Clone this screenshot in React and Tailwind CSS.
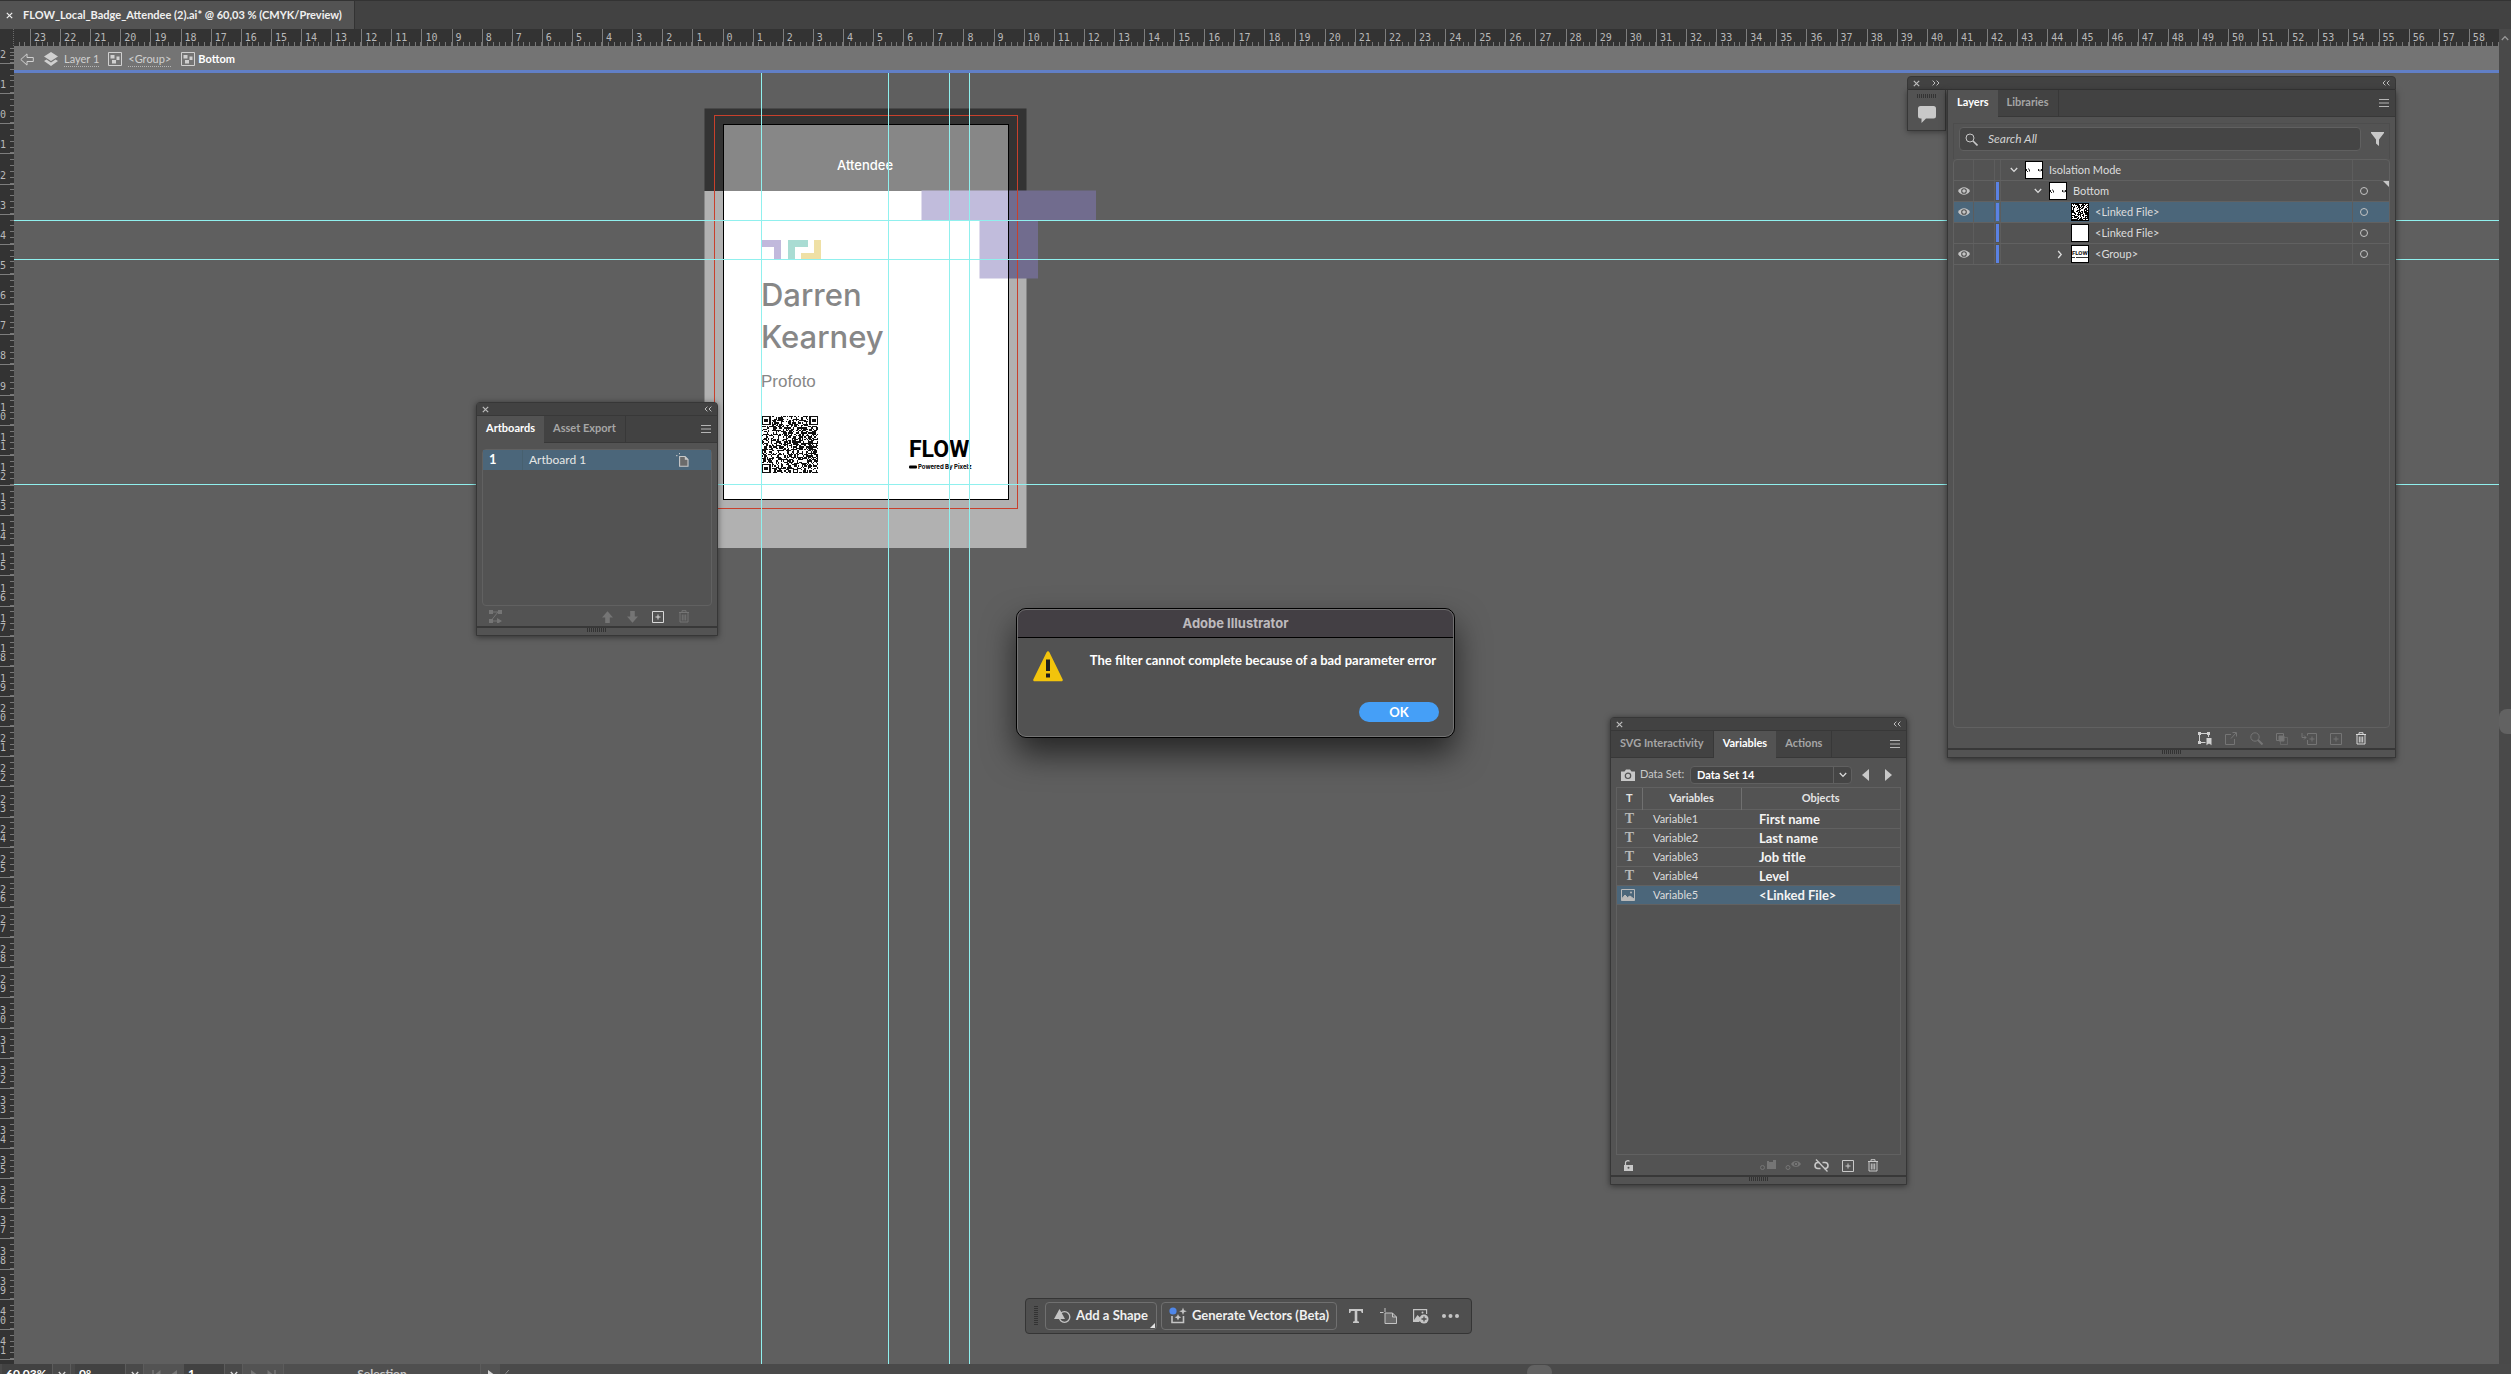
import { useState } from "react";

const H_LABELS = [];
for (let n = 23; n >= 0; n--) H_LABELS.push(n);
for (let n = 1; n <= 58; n++) H_LABELS.push(n);

const V_LABELS = [1];
for (let n = 0; n <= 41; n++) V_LABELS.push(n);

const VARIABLES = [
  { name: "Variable1", object: "First name", kind: "text" },
  { name: "Variable2", object: "Last name", kind: "text" },
  { name: "Variable3", object: "Job title", kind: "text" },
  { name: "Variable4", object: "Level", kind: "text" },
  { name: "Variable5", object: "<Linked File>", kind: "image" },
];

const LAYERS = [
  { name: "Isolation Mode", thumb: "page", arrow: "down", pad: "pl-1", root: true },
  { name: "Bottom", thumb: "page", arrow: "down", pad: "pl-7", visible: true, corner: true },
  { name: "<Linked File>", thumb: "qr", pad: "pl-[50px]", visible: true, selected: true },
  { name: "<Linked File>", thumb: "blank", pad: "pl-[50px]" },
  { name: "<Group>", thumb: "flow", arrow: "right", pad: "pl-[50px]", visible: true },
];

/* ---------- icons ---------- */

function Svg({ w = 14, h = 14, children, className = "" }) {
  return (
    <svg
      width={w}
      height={h}
      viewBox={`0 0 ${w} ${h}`}
      fill="none"
      stroke="currentColor"
      className={`shrink-0 ${className}`}
      aria-hidden="true"
    >
      {children}
    </svg>
  );
}

const CloseIcon = () => (
  <Svg w={7} h={7}>
    <path d="M.8.8l5.4 5.4M6.2.8L.8 6.2" strokeWidth="1.2" />
  </Svg>
);

const CollapseIcon = ({ flip }) => (
  <Svg w={8} h={6} className={flip ? "rotate-180" : ""}>
    <path d="M3.4.6L1 3l2.4 2.4M7.4.6L5 3l2.4 2.4" />
  </Svg>
);

const MenuIcon = () => (
  <Svg w={10} h={8}>
    <path d="M0 .5h10M0 4h10M0 7.5h10" />
  </Svg>
);

const ChevronDown = () => (
  <Svg w={8} h={6}>
    <path d="M.8 1L4 4.4 7.2 1" strokeWidth="1.3" />
  </Svg>
);

const ChevronRight = () => (
  <Svg w={6} h={9}>
    <path d="M1.2 1l3 3.5-3 3.5" strokeWidth="1.3" />
  </Svg>
);

const PlusBox = () => (
  <Svg w={12} h={12}>
    <path d="M.5.5h11v11H.5zM6 3.5v5M3.5 6h5" />
  </Svg>
);

const TrashIcon = () => (
  <Svg w={12} h={13}>
    <path d="M1 2.5h10M4 2V.7h4V2M2 3v9h8V3M4.3 4.5v6M6 4.5v6M7.7 4.5v6" />
  </Svg>
);

const EyeIcon = () => (
  <Svg w={12} h={8}>
    <path d="M0 4C1.6 1.4 3.6.2 6 .2S10.4 1.4 12 4c-1.6 2.6-3.600 3.800-6 3.800S1.600 6.600 0 4z" fill="currentColor" stroke="none" />
    <circle cx="6" cy="4" r="2.3" stroke="#505050" strokeWidth="1.1" />
  </Svg>
);

const GroupIcon = () => (
  <Svg w={14} h={14}>
    <path d="M.5.5h13v13H.5z" />
    <path d="M2.5 3h4v3.500h-4zM8.500 4.500h3V8h-3zM4 8h4v3.500H4z" fill="currentColor" stroke="none" />
  </Svg>
);

const ArrowUp = ({ flip }) => (
  <Svg w={11} h={12} className={flip ? "rotate-180" : ""}>
    <path d="M5.5.3L11 6.500H7.800V12H3.200V6.500H0z" fill="currentColor" stroke="none" />
  </Svg>
);

const PageIcon = ({ className }) => (
  <Svg w={13} h={14} className={className}>
    <path d="M3.600 3.500h5.400l3 3v6.800H3.600z" fill="#6b6b6b" strokeWidth="1.100" />
    <path d="M8.800 3.300v3.500h3.500z" fill="currentColor" stroke="none" />
    <path d="M3.500 0v1.200M0 2.700h1.500" />
  </Svg>
);

/* ---------- QR code ---------- */

const QR_SIZE = 45;
const QR_PATH = (() => {
  let seed = 90210;
  let d = "";
  const finder = (x, y) => {
    if (x > 7 || y > 7) return null;
    if (x === 7 || y === 7) return false;
    const ring = Math.max(Math.abs(x - 3), Math.abs(y - 3));
    return ring === 3 || ring <= 1;
  };
  for (let y = 0; y < QR_SIZE; y++) {
    for (let x = 0; x < QR_SIZE; x++) {
      seed = (seed * 1103515245 + 12345) % 2147483648;
      const f =
        finder(x, y) ?? finder(QR_SIZE - 1 - x, y) ?? finder(x, QR_SIZE - 1 - y);
      if (f ?? seed / 2147483648 > 0.48) d += `M${x} ${y}h1v1h-1z`;
    }
  }
  return d;
})();

/* ---------- rulers ---------- */

function TopRuler() {
  return (
    <div className="flex h-[17px] bg-[#333333] font-['DejaVu_Sans_Mono',monospace] text-[10px] leading-4 text-[#b9b9b9]">
      <div className="w-[14px] shrink-0 border-r border-dotted border-[#6a6a6a]" />
      <div className="flex w-4 shrink-0 items-end justify-evenly">
        <i className="h-1 w-px bg-[#777]" />
        <i className="h-1 w-px bg-[#777]" />
      </div>
      {H_LABELS.map((n, i) => (
        <div key={i} className="relative flex min-w-0 flex-1 items-end border-l border-[#7d7d7d]">
          {[1, 2, 3, 4, 5].map((t) => (
            <i key={t} className="h-1 flex-1 border-r border-[#777] last:border-r-0" />
          ))}
          <span className="absolute left-[3px] top-px">{n}</span>
        </div>
      ))}
    </div>
  );
}

function VCell({ label, className = "" }) {
  return (
    <div className={`relative flex flex-col items-end border-b border-[#7d7d7d] ${className}`}>
      {[1, 2, 3, 4, 5].map((t) => (
        <i key={t} className="w-1 flex-1 border-b border-[#777] last:border-b-0" />
      ))}
      <span className="absolute bottom-1 left-0 w-[6px] break-all leading-[9px]">{label}</span>
    </div>
  );
}

function LeftRuler() {
  return (
    <div className="flex w-[14px] shrink-0 flex-col bg-[#333333] font-['DejaVu_Sans_Mono',monospace] text-[10px] text-[#b9b9b9]">
      <VCell label="2" className="h-[18px]" />
      {V_LABELS.map((n, i) => (
        <VCell key={i} label={n} className="min-h-0 flex-1" />
      ))}
      <div className="h-1" />
    </div>
  );
}

/* ---------- badge artwork ---------- */

function Artwork() {
  return (
    <svg
      className="absolute left-[690px] top-[17px]"
      width="440"
      height="480"
      viewBox="690 90 440 480"
      aria-label="Attendee badge"
    >
      <rect x="704.5" y="191" width="322" height="357" fill="#b1b1b1" />
      <rect x="704.5" y="108.5" width="322" height="82.5" fill="#333333" />
      <rect x="723.5" y="124.5" width="285" height="375" fill="#fff" />
      <rect x="723.5" y="124.5" width="285" height="66.5" fill="#878787" />

      <path d="M1008.5 190.5H1096V220h-58v58.5h-29.5z" fill="#716c8e" />
      <path d="M921.5 190.5h87v88h-29V220h-58z" fill="#c1bcdc" />

      <rect x="723.5" y="124.5" width="285" height="375" fill="none" stroke="#000" />
      <rect x="714.5" y="115.5" width="303" height="393" fill="none" stroke="#c8402c" />

      <path d="M762 240h19v19h-7v-12h-12z" fill="#c1b9dc" />
      <path d="M788 240h20v7h-13v12h-7z" fill="#a9dcd3" />
      <path d="M814 240h7v19h-20v-6h13z" fill="#efe0a5" />

      <g fontFamily="Inter, sans-serif" fontWeight="500">
        <text x="837" y="170" fontSize="13" fill="#fff">Attendee</text>
        <text x="761" y="306" fontSize="31" fill="#878787">Darren</text>
        <text x="761" y="348" fontSize="31" fill="#878787">Kearney</text>
      </g>
      <text x="761" y="387" fontSize="17" fill="#878787" fontFamily="'Liberation Sans', sans-serif">
        Profoto
      </text>

      <svg x="762" y="416" width="56" height="57" viewBox="0 0 45 45" preserveAspectRatio="none">
        <path d={QR_PATH} fill="#111" shapeRendering="crispEdges" />
      </svg>

      <text x="909" y="457" fontSize="23" fontWeight="700" fill="#000" fontFamily="'Liberation Sans Narrow', Roboto, sans-serif">
        FLOW
      </text>
      <rect x="909" y="465.5" width="8" height="3" rx="1" fill="#000" />
      <text x="918" y="469" fontSize="6" fontWeight="700" fill="#000" fontFamily="Inter, sans-serif">
        Powered By Pixelz
      </text>
    </svg>
  );
}

function Guides() {
  return (
    <>
      <i className="absolute inset-y-0 left-[747px] w-px bg-[#90f0ee]" />
      <i className="absolute inset-y-0 left-[874px] w-px bg-[#90f0ee]" />
      <i className="absolute inset-y-0 left-[935px] w-px bg-[#90f0ee]" />
      <i className="absolute inset-y-0 left-[955px] w-px bg-[#90f0ee]" />
      <i className="absolute inset-x-0 top-[147px] h-px bg-[#90f0ee]" />
      <i className="absolute inset-x-0 top-[186px] h-px bg-[#90f0ee]" />
      <i className="absolute inset-x-0 top-[411px] h-px bg-[#90f0ee]" />
    </>
  );
}

/* ---------- floating panels ---------- */

function Grip({ className = "" }) {
  return (
    <div
      className={`h-1 w-5 bg-[repeating-linear-gradient(90deg,#333_0_1px,transparent_1px_2px)] ${className}`}
    />
  );
}

function TabStrip({ tabs, active, onChange }) {
  return (
    <div className="flex h-[27px] bg-[#424242]" role="tablist">
      {tabs.map((tab) => (
        <button
          key={tab}
          role="tab"
          aria-selected={tab === active}
          onClick={() => onChange(tab)}
          className={
            tab === active
              ? "bg-[#535353] px-[9px] pb-[2px] text-[11px] font-bold text-white"
              : "border-r border-b border-[#383838] px-[9px] pb-px text-[11px] font-bold text-[#a6a6a6]"
          }
        >
          {tab}
        </button>
      ))}
      <div className="flex flex-1 items-center justify-end border-b border-[#383838] pr-[6px]">
        <button aria-label="Panel menu" className="text-[#b5b5b5]">
          <MenuIcon />
        </button>
      </div>
    </div>
  );
}

function PanelFoot() {
  return (
    <div className="flex h-[9px] justify-center border-t-2 border-[#383838]">
      <Grip />
    </div>
  );
}

function TitleBar() {
  return (
    <div className="flex h-[13px] items-center justify-between border-b border-[#383838] bg-[#424242] px-[5px] text-[#bdbdbd]">
      <button aria-label="Close panel"><CloseIcon /></button>
      <button aria-label="Collapse panel"><CollapseIcon /></button>
    </div>
  );
}

function ArtboardsPanel() {
  const [tab, setTab] = useState("Artboards");
  return (
    <section className="absolute left-[476px] top-[402px] flex h-[234px] w-[242px] flex-col rounded-t border border-[#373737] bg-[#535353] shadow-[0_1px_6px_rgba(0,0,0,0.5)]">
      <TitleBar />
      <TabStrip tabs={["Artboards", "Asset Export"]} active={tab} onChange={setTab} />
      <div className="mx-[5px] mt-[6px] flex-1 rounded-sm border border-[#616161]">
        <div className="flex h-5 items-center bg-[#4b667a] text-[12px] text-[#e6e6e6]">
          <span className="w-10 border-r border-[#47606f] pl-[6px] text-[13px] font-bold text-white">1</span>
          <span className="flex-1 pl-[6px]">Artboard 1</span>
          <PageIcon className="mr-[22px] text-[#c8c8c8]" />
        </div>
      </div>
      <div className="flex h-5 items-center pl-3 pr-[27px] pt-px text-[#757575]">
        <button aria-label="Rearrange all artboards" className="mr-auto">
          <Svg w={13} h={13}>
            <path d="M0 0h4v4H0zM9 0h4v4H9zM0 9h4v4H0zM8 8l5 3-5 3z" fill="currentColor" stroke="none" />
            <path d="M4 2h5L3 9.500M4 11h5" />
          </Svg>
        </button>
        <div className="flex items-center gap-[14px]">
          <button aria-label="Move up"><ArrowUp /></button>
          <button aria-label="Move down"><ArrowUp flip /></button>
          <button aria-label="New artboard" className="text-[#d8d8d8]"><PlusBox /></button>
          <button aria-label="Delete artboard"><TrashIcon /></button>
        </div>
      </div>
      <PanelFoot />
    </section>
  );
}

function Thumb({ kind }) {
  return (
    <svg width="18" height="18" viewBox="0 0 18 18" className="shrink-0" aria-hidden="true">
      <rect x=".5" y=".5" width="17" height="17" fill="#fff" stroke="#000" />
      {kind === "page" && (
        <path d="M1 8h1v2H1zM3 7.500h1v1H3zM4 8.500h1v2H4zM2 10h1v1H2zM13 8h1v2h-1zM14.500 8.500h1v2h-1zM16 8h1v2h-1z" fill="#222" />
      )}
      {kind === "qr" && (
        <svg x="1" y="1" width="16" height="16" viewBox="12 12 16 16">
          <path d={QR_PATH} fill="#000" />
        </svg>
      )}
      {kind === "flow" && (
        <>
          <text x="1" y="10" fontSize="6" fontWeight="700" fontFamily="Roboto, sans-serif" fill="#111">FLOW</text>
          <path d="M1 12.500h3M5 12.500h12" stroke="#333" />
        </>
      )}
    </svg>
  );
}

function LayerRow({ layer }) {
  return (
    <li
      className={`relative flex h-[21px] border-b border-[#616161] text-[11px] text-[#dcdcdc] ${
        layer.selected ? "bg-[#4b667a]" : ""
      }`}
    >
      <button
        aria-label="Toggle visibility"
        className="flex w-5 items-center justify-center border-r border-[#5d5d5d] text-[#c4c4c4]"
      >
        {layer.visible && <EyeIcon />}
      </button>
      <button aria-label="Toggle lock" className="w-[21px] border-r border-[#5d5d5d]" />
      <span className="flex w-[6px] justify-center border-r border-[#5d5d5d] py-px">
        {!layer.root && <i className="w-[3px] bg-[#5b82e3]" />}
      </span>
      <div className={`flex flex-1 items-center border-r border-[#5d5d5d] ${layer.pad}`}>
        <span className="flex w-[17px] shrink-0 items-center justify-center text-[#dcdcdc]">
          {layer.arrow === "down" && <ChevronDown />}
          {layer.arrow === "right" && <ChevronRight />}
        </span>
        <span className="ml-[3px] flex items-center gap-[6px]">
          <Thumb kind={layer.thumb} />
          {layer.name}
        </span>
      </div>
      <span className="flex w-9 items-center pl-[7px]">
        {!layer.root && <i className="size-[8px] rounded-full border border-[#c4c4c4]" />}
      </span>
      {layer.corner && (
        <Svg w={6} h={6} className="absolute right-0 top-0">
          <path d="M0 0h6v6z" fill="#c8c8c8" stroke="none" />
        </Svg>
      )}
    </li>
  );
}

function LayersPanel() {
  const [tab, setTab] = useState("Layers");
  return (
    <section className="absolute right-[115px] top-[76px] w-[489px]">
      <div className="flex h-[14px] items-center rounded-t border border-[#373737] bg-[#424242] px-[5px] text-[#bdbdbd]">
        <button aria-label="Close panel"><CloseIcon /></button>
        <button aria-label="Expand comments" className="ml-3"><CollapseIcon flip /></button>
        <button aria-label="Collapse panel" className="ml-auto"><CollapseIcon /></button>
      </div>
      <div className="flex items-start">
        <div className="mr-px flex h-[41px] w-[39px] flex-col items-center border border-t-0 border-[#373737] bg-[#535353] pt-1 text-[#c8c8c8] shadow-[0_1px_6px_rgba(0,0,0,0.4)]">
          <Grip />
          <button aria-label="Comments" className="mt-2">
            <Svg w={18} h={17}>
              <path d="M2.500 0h13A2.500 2.500 0 0118 2.500V10a2.500 2.500 0 01-2.500 2.500H8L3.500 17v-4.500h-1A2.500 2.500 0 010 10V2.500A2.500 2.500 0 012.500 0z" fill="currentColor" stroke="none" />
            </Svg>
          </button>
        </div>
        <div className="flex h-[668px] flex-1 flex-col border border-t-0 border-[#373737] bg-[#535353] shadow-[0_2px_6px_rgba(0,0,0,0.5)]">
          <TabStrip tabs={["Layers", "Libraries"]} active={tab} onChange={setTab} />
          <div className="mx-[5px] mt-[6px] flex h-9 items-center border border-b-0 border-[#4d4d4d] px-[5px] pb-[5px]">
            <label className="flex h-6 flex-1 items-center rounded-sm border border-[#606060] bg-[#454545] pl-[5px] text-[#c8c8c8]">
              <Svg w={13} h={13}>
                <circle cx="5" cy="5" r="4" />
                <path d="M8 8l4.500 4.500" strokeWidth="1.600" />
              </Svg>
              <input
                type="text"
                aria-label="Search layers"
                placeholder="Search All"
                className="ml-[10px] w-full bg-transparent text-[12px] italic outline-none placeholder:text-[#d2d2d2]"
              />
            </label>
            <button aria-label="Filter" className="ml-[10px] text-[#c8c8c8]">
              <Svg w={13} h={14}>
                <path d="M0 0h13v1L8 7.500V14l-3-2.500v-4L0 1z" fill="currentColor" stroke="none" />
              </Svg>
            </button>
          </div>
          <ul className="mx-[5px] flex-1 rounded-sm border border-[#616161]">
            {LAYERS.map((l, i) => (
              <LayerRow key={i} layer={l} />
            ))}
          </ul>
          <div className="flex h-5 items-center justify-end gap-[13px] pr-7 pt-px text-[#757575]">
            <button aria-label="Collect for export" className="text-[#d0d0d0]">
              <Svg w={14} h={14}>
                <path d="M1.500 1.500h9v9h-9z" />
                <path d="M0 0h3v3H0zM9 0h3v3H9zM0 9h3v3H0z" fill="currentColor" stroke="none" />
                <path d="M8 5.500h6V14l-3-2-3 2z" fill="currentColor" stroke="#535353" />
              </Svg>
            </button>
            <button aria-label="Export">
              <Svg w={12} h={13}>
                <path d="M6 2.500H.5v10h9V7M6 6.500L11 1M7.500.5h4v4" />
              </Svg>
            </button>
            <button aria-label="Locate object">
              <Svg w={13} h={13}>
                <circle cx="5" cy="5" r="4.200" />
                <path d="M8 8l4.500 4.500" strokeWidth="2" />
              </Svg>
            </button>
            <button aria-label="Clipping mask">
              <Svg w={12} h={12}>
                <path d="M.5.5h7v7h-7z" />
                <path d="M4.500 4.500h7v7h-7z" opacity=".6" />
                <path d="M3 3h5v5H3z" fill="currentColor" />
              </Svg>
            </button>
            <button aria-label="New sublayer">
              <Svg w={16} h={12}>
                <path d="M1 0v4.500h4M3 2.500l2 2-2 2M6.500 2.500v-2h9v11h-9V7M11 3.500v5M8.500 6h5" />
              </Svg>
            </button>
            <button aria-label="New layer"><PlusBox /></button>
            <button aria-label="Delete layer" className="text-[#d8d8d8]"><TrashIcon /></button>
          </div>
          <PanelFoot />
        </div>
      </div>
    </section>
  );
}

function VariablesPanel() {
  const [tab, setTab] = useState("Variables");
  const [selected, setSelected] = useState("Variable5");
  return (
    <section className="absolute left-[1610px] top-[717px] flex h-[468px] w-[297px] flex-col rounded-t border border-[#373737] bg-[#535353] shadow-[0_1px_6px_rgba(0,0,0,0.5)]">
      <TitleBar />
      <TabStrip tabs={["SVG Interactivity", "Variables", "Actions"]} active={tab} onChange={setTab} />
      <div className="flex h-[29px] items-center pl-[10px] pr-[14px] pt-1 text-[#c8c8c8]">
        <button aria-label="Capture data set">
          <Svg w={14} h={12}>
            <path d="M0 2.500h3.500L5 .5h4l1.500 2H14V12H0z" fill="currentColor" stroke="none" />
            <circle cx="7" cy="6.800" r="2.700" stroke="#535353" strokeWidth="1.200" />
          </Svg>
        </button>
        <label htmlFor="dataset" className="ml-[5px] text-[11px]">Data Set:</label>
        <div className="relative ml-auto flex">
          <select
            id="dataset"
            className="h-[18px] w-[162px] appearance-none rounded-sm border border-[#606060] bg-[#454545] pl-[6px] text-[11px] font-bold text-white"
          >
            <option>Data Set 14</option>
          </select>
          <span className="pointer-events-none absolute inset-y-px right-px flex w-[18px] items-center justify-center border-l border-[#606060] text-[#dcdcdc]">
            <ChevronDown />
          </span>
        </div>
        <button aria-label="Previous data set" className="ml-[10px]">
          <Svg w={7} h={12}><path d="M7 0v12L0 6z" fill="currentColor" stroke="none" /></Svg>
        </button>
        <button aria-label="Next data set" className="ml-4">
          <Svg w={7} h={12}><path d="M0 0v12l7-6z" fill="currentColor" stroke="none" /></Svg>
        </button>
      </div>
      <div className="mx-[5px] flex-1 border border-[#616161]">
        <table className="w-full table-fixed border-collapse text-left">
          <thead>
            <tr className="h-[21px] border-b border-[#616161] text-center text-[11px] text-[#e4e4e4]">
              <th className="w-[25px] border-r border-[#707070] font-bold">T</th>
              <th className="w-[99px] border-r border-[#707070] font-bold">Variables</th>
              <th className="font-bold">Objects</th>
            </tr>
          </thead>
          <tbody>
            {VARIABLES.map((v) => (
              <tr
                key={v.name}
                onClick={() => setSelected(v.name)}
                className={`h-[19px] border-b border-[#616161] ${selected === v.name ? "bg-[#4b667a]" : ""}`}
              >
                <td className="text-center font-['Liberation_Serif',serif] text-[14px] leading-[18px] font-bold text-[#b9b9b9]">
                  {v.kind === "text" ? (
                    "T"
                  ) : (
                    <Svg w={14} h={12} className="ml-1">
                      <path d="M.5.5h13v11H.5z" />
                      <path d="M1 9.500L4 6l2.500 2.500L9 7l4 3v1.500H1z" fill="currentColor" />
                      <circle cx="10" cy="3.500" r="1" fill="currentColor" stroke="none" />
                    </Svg>
                  )}
                </td>
                <td className="pl-[11px] text-[11px] leading-[18px] text-[#dcdcdc]">{v.name}</td>
                <td className="pl-[18px] text-[13px] leading-[18px] font-bold text-[#f4f4f4]">{v.object}</td>
              </tr>
            ))}
          </tbody>
        </table>
      </div>
      <div className="flex h-5 items-center justify-end gap-[13px] pl-[13px] pr-[27px] pt-px text-[#c8c8c8]">
        <button aria-label="Unlock" className="mr-auto">
          <Svg w={9} h={11}>
            <path d="M0 5h9v6H0z" fill="currentColor" stroke="none" />
            <path d="M1.500 5V2.500C1.500.7 4.500.2 5.500 1.300" strokeWidth="1.200" />
            <circle cx="4.500" cy="7.800" r="1" fill="#535353" stroke="none" />
          </Svg>
        </button>
        <button aria-label="Make text dynamic" className="text-[#757575]">
          <Svg w={17} h={11}>
            <circle cx="3.500" cy="7.500" r="2" />
            <path d="M8 1h2v1h4V0h3v9H8z" fill="currentColor" stroke="none" />
          </Svg>
        </button>
        <button aria-label="Make visibility dynamic" className="-ml-1 text-[#757575]">
          <Svg w={16} h={11}>
            <circle cx="3" cy="7.500" r="2" />
            <path d="M6 4c2.500-4 7.500-4 10 0-2.500 4-7.500 4-10 0z" fill="currentColor" stroke="none" />
            <circle cx="11" cy="4" r="1.800" stroke="#535353" />
          </Svg>
        </button>
        <button aria-label="Unbind variable">
          <Svg w={15} h={13}>
            <path d="M5.500 3.500H4a3 3 0 000 6h2.500M8.500 3.500H11a3 3 0 010 6h-.5" strokeWidth="1.600" />
            <path d="M2 .5l11.500 12" strokeWidth="1.300" />
          </Svg>
        </button>
        <button aria-label="New variable"><PlusBox /></button>
        <button aria-label="Delete variable"><TrashIcon /></button>
      </div>
      <PanelFoot />
    </section>
  );
}

function ErrorDialog() {
  return (
    <div
      role="alertdialog"
      aria-labelledby="dlg-title"
      className="absolute left-[1016px] top-[608px] w-[439px] overflow-hidden rounded-[10px] border border-black bg-[#525252] shadow-[0_16px_32px_rgba(0,0,0,0.6)]"
    >
      <div className="absolute inset-0 rounded-[9px] border border-[#7d7d7d]/80" />
      <h2
        id="dlg-title"
        className="border-b border-black bg-[#433f44] text-center font-[Inter,sans-serif] text-[13px] leading-7 font-bold text-[#bdbabd]"
      >
        Adobe Illustrator
      </h2>
      <div className="relative flex items-start justify-between pl-4 pr-[18px] pt-[13px]">
        <svg width="30" height="31" viewBox="0 0 30 31" aria-hidden="true">
          <path d="M13.600 1.200a1.600 1.600 0 012.800 0l13.200 27c.5 1-.1 2-1.200 2H1.600c-1.100 0-1.700-1-1.200-2z" fill="#f2c40c" />
          <path d="M13 8.500h4V20h-4zM13 22.500h4v4h-4z" fill="#1e1e1e" />
        </svg>
        <p className="text-[13px] leading-[18px] font-bold text-white">
          The filter cannot complete because of a bad parameter error
        </p>
      </div>
      <div className="relative flex justify-end px-[15px] pb-[15px] pt-5">
        <button className="h-5 w-20 rounded-full bg-[#459ff7] text-[13px] leading-5 font-bold text-white">OK</button>
      </div>
    </div>
  );
}

function TaskBar() {
  return (
    <div className="absolute left-[1025px] top-[1298px] flex h-9 items-center rounded border border-[#353535] bg-[#4f4f4f] pl-2 pr-3 text-[13px] font-bold text-[#f0f0f0]">
      <div className="h-5 w-1 bg-[repeating-linear-gradient(180deg,#333_0_1px,transparent_1px_2px)]" />
      <button className="relative ml-[7px] flex h-7 w-28 items-center justify-center gap-[5px] rounded-sm border border-[#707070]">
        <Svg w={17} h={14} className="text-[#c4c4c4]">
          <circle cx="10.500" cy="8" r="5.300" strokeWidth="1.300" />
          <path d="M5.500 0L11 10H0z" fill="currentColor" stroke="none" />
        </Svg>
        Add a Shape
        <Svg w={5} h={5} className="absolute bottom-px right-px">
          <path d="M5 0v5H0z" fill="#e4e4e4" stroke="none" />
        </Svg>
      </button>
      <button className="ml-1 flex h-7 w-44 items-center justify-center gap-[5px] rounded-sm border border-[#707070]">
        <Svg w={18} h={18} className="text-[#c4c4c4]">
          <path d="M3 9v6.500h11.500V9" strokeWidth="1.600" />
          <path d="M9 7l1 2.300 2.300 1L10 11.200 9 13.500l-1-2.300-2.300-1L8 9.300zM14 .5l1 2.800 2.800 1L15 5.300l-1 2.800-1-2.800-2.800-1 2.800-1z" fill="currentColor" stroke="none" />
          <circle cx="4" cy="4" r="3.600" fill="#4f86e8" stroke="none" />
        </Svg>
        Generate Vectors (Beta)
      </button>
      <button aria-label="Type" className="ml-3 text-[#c8c8c8]">
        <Svg w={14} h={14}>
          <path d="M0 0h14v4h-1.300c-.2-1.500-.7-2-2-2H8.300v9.500c0 .8.400 1 1.700 1V14H4v-1.500c1.300 0 1.700-.2 1.700-1V2H3.300c-1.300 0-1.800.5-2 2H0z" fill="currentColor" stroke="none" />
        </Svg>
      </button>
      <button aria-label="Artboard" className="ml-[17px] text-[#c4c4c4]">
        <Svg w={17} h={16}>
          <path d="M5 5h7.500l4 4v6.500H5z" fill="#6a6a6a" />
          <path d="M12.500 5v4h4M5 0v4M0 4.500h3.500" />
        </Svg>
      </button>
      <button aria-label="Place image" className="ml-4 text-[#c4c4c4]">
        <Svg w={16} h={15}>
          <path d="M6 12.500H.6V.6h13V5" strokeWidth="1.200" />
          <path d="M1 11l3.500-5 3 3L8 12.500H1z" fill="currentColor" stroke="none" />
          <circle cx="9.500" cy="3.500" r="1" fill="currentColor" stroke="none" />
          <circle cx="11" cy="10" r="4.500" fill="currentColor" stroke="none" />
          <path d="M11 7.500v5M8.500 10h5" stroke="#4f4f4f" strokeWidth="1.300" />
        </Svg>
      </button>
      <button aria-label="More options" className="ml-[13px] text-[#c4c4c4]">
        <Svg w={17} h={4}>
          <g fill="currentColor" stroke="none">
            <circle cx="2" cy="2" r="2" />
            <circle cx="8.500" cy="2" r="2" />
            <circle cx="15" cy="2" r="2" />
          </g>
        </Svg>
      </button>
    </div>
  );
}

/* ---------- document chrome ---------- */

function Breadcrumb() {
  return (
    <nav className="flex h-6 items-center bg-[#747474] pl-[6px] pt-[2px] text-[11px] text-[#d0d0d0]">
      <button aria-label="Back">
        <Svg w={14} h={13}>
          <path d="M.8 6.500L7 .9v3.600h6.300v4H7v3.600z" />
        </Svg>
      </button>
      <Svg w={14} h={14} className="ml-[10px]">
        <path d="M7 0l7 4.500L7 9 0 4.500zM0 9l2.500-1.500L7 10.400l4.500-2.900L14 9l-7 5z" fill="currentColor" stroke="none" />
      </Svg>
      <a href="#layer" className="ml-[6px] border-b border-dotted border-[#b5b5b5] leading-[15px]">Layer 1</a>
      <span className="ml-[9px]"><GroupIcon /></span>
      <a href="#group" className="ml-[6px] border-b border-dotted border-[#b5b5b5] leading-[15px]">&lt;Group&gt;</a>
      <span className="ml-[10px]"><GroupIcon /></span>
      <span className="ml-[3px] font-bold text-white">Bottom</span>
    </nav>
  );
}

function StatusField({ label, value, width }) {
  return (
    <div className="flex h-5 border-r border-[#5c5c5c]">
      <input
        aria-label={label}
        defaultValue={value}
        className={`${width} border-r border-[#5c5c5c] bg-[#424242] pl-1 text-[12px] font-bold text-white`}
      />
      <span className="flex w-[17px] items-center justify-center text-[#dcdcdc]"><ChevronDown /></span>
    </div>
  );
}

function StatusBar() {
  return (
    <footer className="flex h-[10px] items-start overflow-hidden bg-[#4a4a4a] pl-[2px] text-[12px] leading-5 text-[#c4c4c4]">
      <StatusField label="Zoom" value="60,03%" width="w-[51px]" />
      <span className="w-1" />
      <StatusField label="Rotate view" value="0°" width="w-[51px]" />
      <div className="flex h-5 w-10 items-center justify-center gap-[10px] bg-[#535353] text-[#757575]">
        <Svg w={9} h={9}><path d="M1 0v9" strokeWidth="1.500" /><path d="M8.500 0v9L3 4.500z" fill="currentColor" stroke="none" /></Svg>
        <Svg w={6} h={9}><path d="M6 0v9L0 4.500z" fill="currentColor" stroke="none" /></Svg>
      </div>
      <StatusField label="Artboard navigation" value="1" width="w-[41px]" />
      <div className="flex h-5 w-10 items-center justify-center gap-[10px] bg-[#535353] text-[#757575]">
        <Svg w={6} h={9}><path d="M0 0v9l6-4.500z" fill="currentColor" stroke="none" /></Svg>
        <Svg w={9} h={9}><path d="M8 0v9" strokeWidth="1.500" /><path d="M.5 0v9L6 4.500z" fill="currentColor" stroke="none" /></Svg>
      </div>
      <span className="h-5 w-[198px] border-x border-[#5c5c5c] bg-[#4f4f4f] text-center font-bold">Selection</span>
      <span className="flex h-5 w-[19px] items-center justify-center bg-[#535353] text-[#d8d8d8]">
        <Svg w={6} h={9}><path d="M0 0v9l6-4.500z" fill="currentColor" stroke="none" /></Svg>
      </span>
      <div className="flex flex-1 items-start pl-1 text-[#8a8a8a]">
        <Svg w={6} h={9} className="mt-[5px] rotate-180"><path d="M1.200 1l3 3.500-3 3.500" /></Svg>
        <span className="flex-[106]" />
        <span className="mt-px h-[14px] w-[25px] rounded-lg bg-[#626262]" />
        <span className="flex-[100]" />
      </div>
    </footer>
  );
}

export default function App() {
  return (
    <div className="relative flex h-screen flex-col overflow-hidden bg-[#5f5f5f] font-[Lato,sans-serif]">
      <header className="flex h-[29px] border-t border-[#333333] bg-[#424242]">
        <div className="flex items-center gap-[10px] border-r border-[#333333] bg-[#535353] pl-[6px] pr-3 text-[11px] font-bold text-[#f0f0f0]">
          <button aria-label="Close document"><CloseIcon /></button>
          FLOW_Local_Badge_Attendee (2).ai* @ 60,03 % (CMYK/Preview)
        </div>
      </header>

      <div className="flex min-h-0 flex-1">
        <div className="flex min-w-0 flex-1 flex-col">
          <TopRuler />
          <div className="flex min-h-0 flex-1">
            <LeftRuler />
            <div className="flex min-w-0 flex-1 flex-col">
              <Breadcrumb />
              <main className="relative flex-1 overflow-hidden border-t-[3px] border-[#617fc6]">
                <div className="absolute -left-[14px] top-0">
                  <Artwork />
                </div>
                <Guides />
              </main>
            </div>
          </div>
        </div>
        <div className="flex w-3 flex-col items-center bg-[#494949] pt-[6px] text-[#9a9a9a]">
          <Svg w={8} h={6} className="rotate-180"><path d="M.8 1L4 4.400 7.200 1" strokeWidth="1.300" /></Svg>
          <span className="flex-[106]" />
          <span className="h-[25px] w-3 rounded-l-lg bg-[#626262]" />
          <span className="flex-[100]" />
        </div>
      </div>

      <StatusBar />

      <ArtboardsPanel />
      <VariablesPanel />
      <LayersPanel />
      <TaskBar />
      <ErrorDialog />
    </div>
  );
}
